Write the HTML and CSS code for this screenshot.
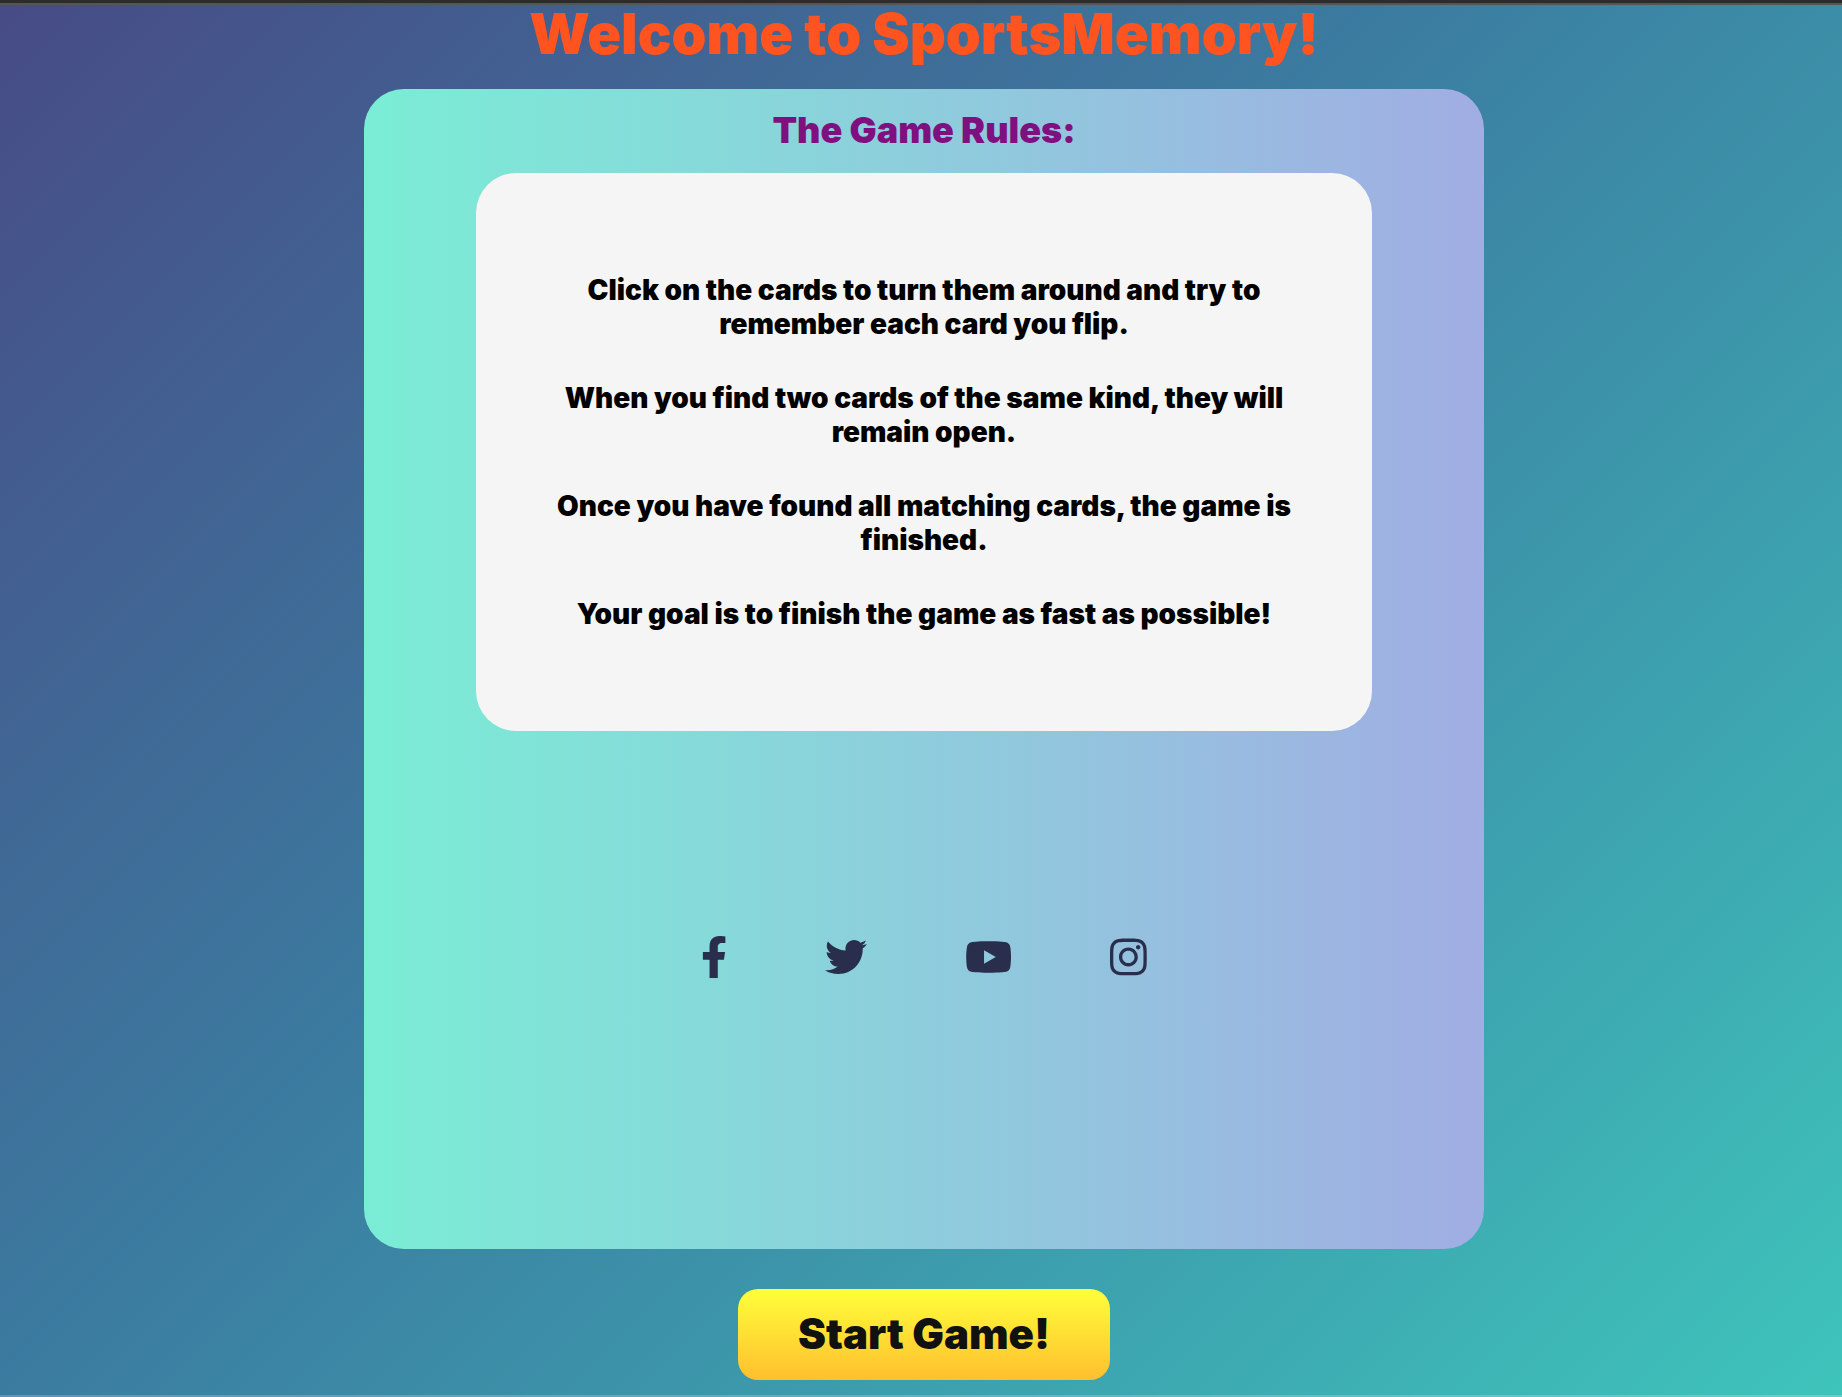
FILE: index.html
```html
<!DOCTYPE html>
<html lang="en">
<head>
  <meta charset="utf-8">
  <meta name="viewport" content="width=device-width, initial-scale=1">
  <title>SportsMemory</title>
  <link rel="stylesheet" href="styles.css">
</head>
<body>
  <main class="page">
    <h1 class="page-title">Welcome to SportsMemory!</h1>
    <section class="card">
      <h2 class="card-title">The Game Rules:</h2>
      <div class="rules">
        <p>Click on the cards to turn them around and try to remember each card you flip.</p>
        <p>When you find two cards of the same kind, they will remain open.</p>
        <p>Once you have found all matching cards, the game is finished.</p>
        <p>Your goal is to finish the game as fast as possible!</p>
      </div>
      <nav class="social" aria-label="Social media">
        <a href="#" aria-label="Facebook"><svg viewBox="0 0 320 512" aria-hidden="true"><path d="M279.14 288l14.22-92.66h-88.91v-60.13c0-25.35 12.42-50.06 52.24-50.06h40.42V6.26S260.43 0 225.36 0c-73.22 0-121.08 44.38-121.08 124.72v70.62H22.89V288h81.39v224h100.17V288z"/></svg></a>
        <a href="#" aria-label="Twitter"><svg viewBox="0 0 512 512" aria-hidden="true"><path d="M459.37 151.716c.325 4.548.325 9.097.325 13.645 0 138.72-105.583 298.558-298.558 298.558-59.452 0-114.68-17.219-161.137-47.106 8.447.974 16.568 1.299 25.34 1.299 49.055 0 94.213-16.568 130.274-44.832-46.132-.975-84.792-31.188-98.112-72.772 6.498.974 12.995 1.624 19.818 1.624 9.421 0 18.843-1.3 27.614-3.573-48.081-9.747-84.143-51.98-84.143-102.985v-1.299c13.969 7.797 30.214 12.67 47.431 13.319-28.264-18.843-46.781-51.005-46.781-87.391 0-19.492 5.197-37.36 14.294-52.954 51.655 63.675 129.3 105.258 216.365 109.807-1.624-7.797-2.599-15.918-2.599-24.04 0-57.828 46.782-104.934 104.934-104.934 30.213 0 57.502 12.67 76.67 33.137 23.715-4.548 46.456-13.32 66.599-25.34-7.798 24.366-24.366 44.833-46.132 57.827 21.117-2.273 41.584-8.122 60.426-16.243-14.292 20.791-32.161 39.308-52.628 54.253z"/></svg></a>
        <a href="#" aria-label="YouTube"><svg viewBox="0 0 576 512" aria-hidden="true"><path d="M549.655 124.083c-6.281-23.65-24.787-42.276-48.284-48.597C458.781 64 288 64 288 64S117.22 64 74.629 75.486c-23.497 6.322-42.003 24.947-48.284 48.597-11.412 42.867-11.412 132.305-11.412 132.305s0 89.438 11.412 132.305c6.281 23.65 24.787 41.5 48.284 47.821C117.22 448 288 448 288 448s170.78 0 213.371-11.486c23.497-6.321 42.003-24.171 48.284-47.821 11.412-42.867 11.412-132.305 11.412-132.305s0-89.438-11.412-132.305zm-317.51 213.508V175.185l142.739 81.205-142.739 81.201z"/></svg></a>
        <a href="#" aria-label="Instagram"><svg viewBox="0 0 448 512" aria-hidden="true"><path d="M224.1 141c-63.6 0-114.9 51.3-114.9 114.9s51.3 114.9 114.9 114.9S339 319.5 339 255.9 287.7 141 224.1 141zm0 189.6c-41.1 0-74.7-33.5-74.7-74.7s33.5-74.7 74.7-74.7 74.7 33.5 74.7 74.7-33.6 74.7-74.7 74.7zm146.4-194.3c0 14.9-12 26.8-26.8 26.8-14.9 0-26.8-12-26.8-26.8s12-26.8 26.8-26.8 26.8 12 26.8 26.8zm76.1 27.2c-1.7-35.9-9.9-67.7-36.2-93.9-26.2-26.2-58-34.4-93.9-36.2-37-2.1-147.9-2.1-184.9 0-35.8 1.7-67.6 9.9-93.9 36.1s-34.4 58-36.2 93.9c-2.1 37-2.1 147.9 0 184.9 1.7 35.9 9.9 67.7 36.2 93.9s58 34.4 93.9 36.2c37 2.1 147.9 2.1 184.9 0 35.9-1.7 67.7-9.9 93.9-36.2 26.2-26.2 34.4-58 36.2-93.9 2.1-37 2.1-147.8 0-184.8zM398.8 388c-7.8 19.6-22.9 34.7-42.6 42.6-29.5 11.7-99.5 9-132.1 9s-102.7 2.6-132.1-9c-19.6-7.8-34.7-22.9-42.6-42.6-11.7-29.5-9-99.5-9-132.1s-2.6-102.7 9-132.1c7.8-19.6 22.9-34.7 42.6-42.6 29.5-11.7 99.5-9 132.1-9s102.7-2.6 132.1 9c19.6 7.8 34.7 22.9 42.6 42.6 11.7 29.5 9 99.5 9 132.1s2.7 102.7-9 132.1z"/></svg></a>
      </nav>
    </section>
    <button class="start" type="button">Start Game!</button>
  </main>
</body>
</html>
```
FILE: styles.css
```css
* {
  box-sizing: border-box;
}

body {
  margin: 0;
  font-family: Inter, "Open Sans", sans-serif;
  font-weight: 900;
  text-align: center;
}

.page {
  display: flex;
  flex-direction: column;
  align-items: center;
  min-height: 100vh;
  padding: 0 0 15px 6px;
  border-top: 3px solid #2c2c2c;
  border-bottom: 2px solid rgb(255 255 255 / 20%);
  background: linear-gradient(135deg, #474b85, #3b7ba0 43%, #3ec4bb) border-box;
  box-shadow: inset 0 2px #555;
}

.page-title {
  margin: 0 0 24px;
  color: #ff5420;
  font-size: 56px;
  font-weight: 900;
  line-height: 62px;
}

.card {
  display: flex;
  flex-direction: column;
  align-items: center;
  width: 90%;
  max-width: 1120px;
  min-height: 1160px;
  padding-top: 20px;
  border-radius: 40px;
  background: linear-gradient(to right, #7aedd5, #a1ade3);
}

.card-title {
  margin: 0 0 22px;
  color: #800f80;
  font-size: 36px;
  font-weight: 900;
  line-height: 42px;
}

.rules {
  display: flex;
  flex-direction: column;
  gap: 40px;
  width: 80%;
  padding: 100px 64px;
  border-radius: 40px;
  background: #f5f5f5;
  color: #000;
  font-size: 28px;
  line-height: 34px;
}

.rules p {
  margin: 0;
}

.social {
  display: flex;
  gap: 98px;
  margin-top: 205px;
}

.social a {
  display: block;
  color: #282e4b;
}

.social svg {
  display: block;
  height: 42px;
  fill: currentColor;
}

.start {
  margin-top: 40px;
  padding: 19px 60px 21px;
  border: 0;
  border-radius: 20px;
  background: linear-gradient(#ffff3a, #ffbf2e);
  color: #111;
  font: inherit;
  font-size: 42px;
  line-height: 51px;
  cursor: pointer;
}
```
